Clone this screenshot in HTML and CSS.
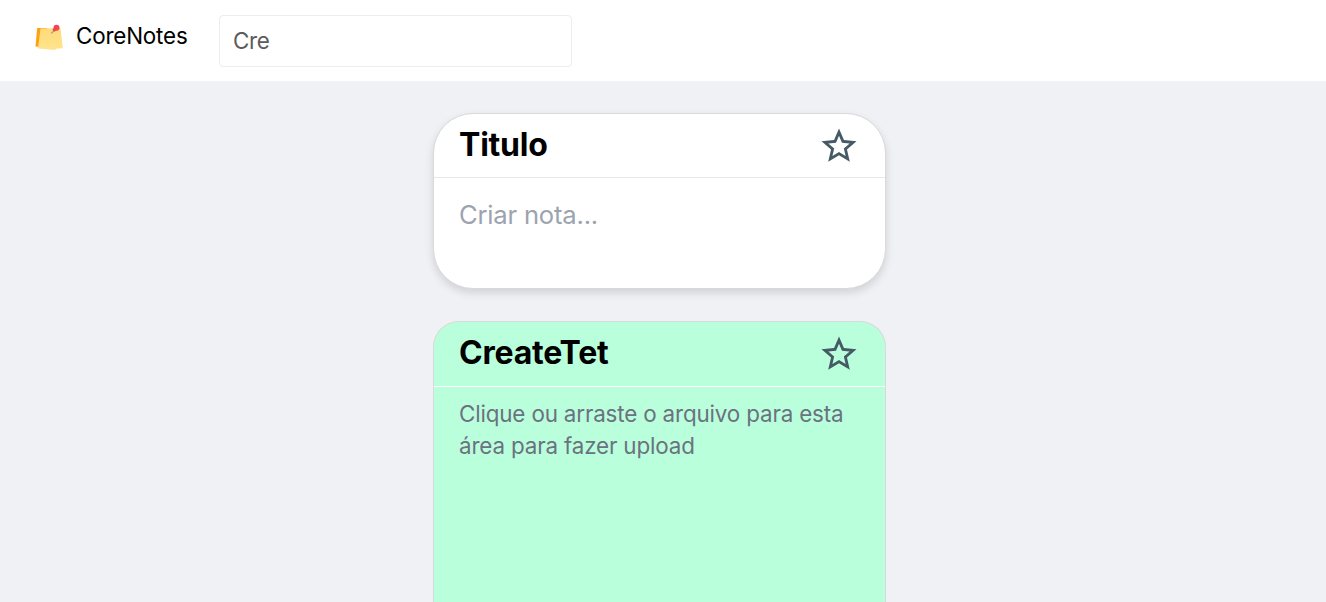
FILE: index.html
```
<!DOCTYPE html>
<html lang="pt-BR">
<head>
<meta charset="utf-8">
<title>CoreNotes</title>
<link rel="stylesheet" href="styles.css">
</head>
<body>
<header class="topbar">
  <div class="brand">
    <svg class="logo" viewBox="0 0 28 26" aria-hidden="true">
      <defs><linearGradient id="paper" x1="0" y1="0" x2="0" y2="1"><stop offset="0" stop-color="#ffda78"/><stop offset="1" stop-color="#ffe48e"/></linearGradient></defs>
      <path fill="#ffa010" d="M2.2 4H12v20L.5 22.5z"/>
      <path fill="url(#paper)" d="M5.5 4.5 25.4 4l2.4 20.3-6.5.4L20 26 3 24.5z"/>
      <path fill="none" stroke="#a9a19c" stroke-width="1.2" d="m16 9.5 3.5-3"/>
      <circle cx="21.5" cy="3.7" r="3" fill="#f5444d"/>
      <circle cx="19.4" cy="5.7" r="1.8" fill="#e94b55"/>
    </svg>
    <span class="brand-name">CoreNotes</span>
  </div>
  <input class="search" type="text" value="Cre" aria-label="Pesquisar">
</header>
<main class="notes">
  <section class="card card-new">
    <div class="card-head">
      <h2 class="title">Titulo</h2>
      <svg class="star" viewBox="0 0 24 24"><path d="M22 9.24l-7.19-.62L12 2 9.19 8.63 2 9.24l5.46 4.73L5.82 21 12 17.27 18.18 21l-1.63-7.03L22 9.24zM12 15.4l-3.76 2.27 1-4.28-3.32-2.88 4.38-.38L12 6.1l1.71 4.04 4.38.38-3.32 2.88 1 4.28L12 15.4z"/></svg>
    </div>
    <p class="placeholder">Criar nota...</p>
  </section>
  <section class="card card-green">
    <div class="card-head">
      <h2 class="title">CreateTet</h2>
      <svg class="star" viewBox="0 0 24 24"><path d="M22 9.24l-7.19-.62L12 2 9.19 8.63 2 9.24l5.46 4.73L5.82 21 12 17.27 18.18 21l-1.63-7.03L22 9.24zM12 15.4l-3.76 2.27 1-4.28-3.32-2.88 4.38-.38L12 6.1l1.71 4.04 4.38.38-3.32 2.88 1 4.28L12 15.4z"/></svg>
    </div>
    <p class="body-text">Clique ou arraste o arquivo para esta área para fazer upload</p>
  </section>
</main>
</body>
</html>
```
FILE: styles.css
```
* { box-sizing: border-box; }
body {
  display: flex;
  flex-direction: column;
  margin: 0;
  height: 100vh;
  background: #f0f1f5;
  font-family: Inter, sans-serif;
  color: #000;
}
.topbar {
  display: flex;
  flex: none;
  align-items: flex-start;
  height: 81px;
  padding: 15px 0 0 35px;
  background: #fff;
}
.brand { display: flex; width: 184px; padding-top: 5px; }
.logo { width: 28px; height: 26px; margin-top: 4px; }
.brand-name { margin-left: 13px; font-size: 22.4px; line-height: 32px; letter-spacing: -.18px; }
.search {
  width: 353px;
  height: 52px;
  padding: 0 13px 1px;
  border: 1px solid #ededed;
  border-radius: 4px;
  background: #fff;
  font: 22.4px/32px Inter, sans-serif;
  letter-spacing: -.3px;
  color: #5c5c5c;
  outline: none;
}
.notes {
  display: flex;
  flex: 1;
  flex-direction: column;
  gap: 32px;
  width: 453px;
  margin: 32px 0 0 433px;
}
.card { border: 1px solid #d9d9d9; }
.card-new {
  height: 176px;
  border-radius: 40px;
  background: #fff;
  box-shadow: 0 4px 8px rgba(0, 0, 0, .13);
}
.card-green {
  flex: 1;
  border-bottom: 0;
  border-radius: 26px 26px 0 0;
  background: #baffdc;
}
.card-head {
  display: flex;
  justify-content: space-between;
  align-items: center;
  height: 64px;
  padding: 0 25px;
  border-bottom: 1px solid #e5e7eb;
}
.card-green .card-head { height: 65px; padding-bottom: 1px; border-color: #fff; }
.title { margin: 0; padding-bottom: 2px; font-size: 32px; line-height: 40px; font-weight: 700; letter-spacing: -.22px; }
.star { width: 42px; height: 42px; fill: #455a64; }
.placeholder { margin: 17px 25px; font-size: 25.6px; line-height: 40px; letter-spacing: -.2px; color: #9ca3af; }
.body-text { margin: 11px 25px; font-size: 22.4px; line-height: 32px; letter-spacing: -.16px; color: #6b7280; }
```
